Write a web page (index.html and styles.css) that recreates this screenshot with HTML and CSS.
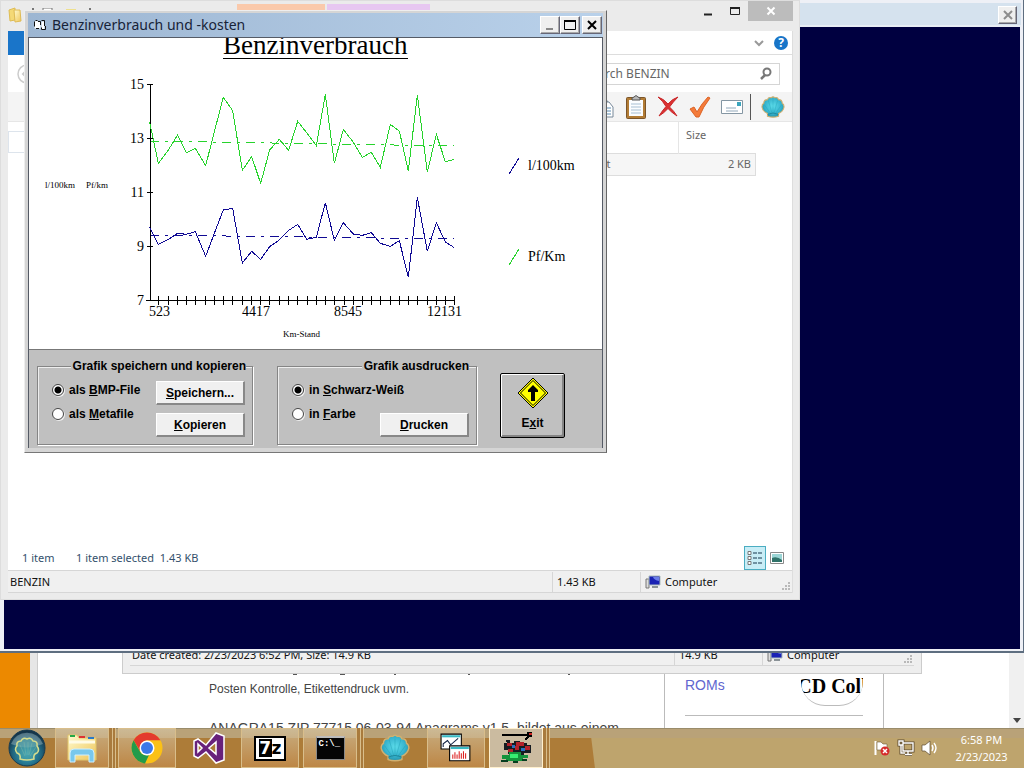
FILE: index.html
```html
<!DOCTYPE html>
<html lang="de">
<head>
<meta charset="utf-8">
<title>Benzinverbrauch und -kosten</title>
<link rel="stylesheet" href="styles.css">
</head>
<body>
<svg class="defs" width="0" height="0" aria-hidden="true">
  <defs>
    <radialGradient id="aqua" cx=".5" cy=".45" r=".6"><stop offset="0" stop-color="#5cdcea"/><stop offset=".6" stop-color="#38b5cf"/><stop offset="1" stop-color="#208ba4"/></radialGradient>
    <linearGradient id="folder" x1="0" y1="0" x2="1" y2="1"><stop offset="0" stop-color="#fffbd0"/><stop offset="1" stop-color="#efc659"/></linearGradient>
    <radialGradient id="orb" cx=".5" cy=".65" r=".6"><stop offset="0" stop-color="#3caac0"/><stop offset=".65" stop-color="#20667f"/><stop offset="1" stop-color="#153449"/></radialGradient>
    <symbol id="shell" viewBox="0 0 26 24">
      <path d="M7 22 L7 19 Q2 17 1 12 Q1 9 3 8 Q3 4 7 4 Q8 1 11 2 Q13 0 15 2 Q18 1 19 4 Q23 4 23 8 Q25 9 25 12 Q24 17 19 19 L19 22 Q13 24 7 22Z" fill="url(#aqua)" stroke="#d0b070" stroke-width="1.200"/>
      <path d="M11 20 4 10M12 19 8 5M13 19V4M14 19 18 5M15 20 22 10" stroke="#1699ab" stroke-width=".8" fill="none" opacity=".4"/>
      <path d="M7 20 Q13 17 19 20" stroke="#166f80" fill="none" opacity=".6"/>
    </symbol>
    <symbol id="pc" viewBox="0 0 16 14">
      <path d="M1 4H4V13H1Z" fill="#ddd" stroke="#777"/><path d="M4 1H15V10H4Z" fill="#1a22b4" stroke="#abb"/>
      <path d="M8 2H14V6Q9 5 8 2Z" fill="#6b7de8"/><path d="M7 12H13" stroke="#8a9297" stroke-width="2"/>
    </symbol>
    <symbol id="grip" viewBox="0 0 9 9"><path d="M6 0h2v2H6zM3 3h2v2H3zM6 3h2v2H6zM0 6h2v2H0zM3 6h2v2H3zM6 6h2v2H6z" fill="#b9b9b9"/></symbol>
  </defs>
</svg>
<div class="desktop">
  <main class="workspace">

    <section class="webpage">
      <div class="web-orange"></div>
      <div class="web-gutter"></div>
      <div class="web-body">
        <article class="web-article">
          <svg class="web-cut" viewBox="0 0 420 3"><path d="M84 1h4M131 1h5M185 1h2M259 1h2M359 1h2" stroke="#555" stroke-width="2"/></svg>
          <p class="web-small">Posten Kontrolle, Etikettendruck uvm.</p>
          <p class="web-large">ANAGRA15.ZIP 77715 06-03-94 Anagrams v1.5, bildet aus einem</p>
        </article>
        <aside class="web-side">
          <div class="rom-row">
            <a class="rom-link" href="#roms">ROMs</a>
            <div class="cd-logo"><span>CD Coll</span></div>
          </div>
        </aside>
      </div>
      <div class="web-scroll"><svg viewBox="0 0 8 5"><path d="M0 0H8L4 5Z" fill="#444"/></svg></div>
    </section>

    <section class="explorer-back">
      <div class="statusbar">
        <span class="status-main">Date created: 2/23/2023 6:52 PM, Size: 14.9 KB</span>
        <span class="status-size">14.9 KB</span>
        <span class="status-zone"><svg class="pc"><use href="#pc"/></svg>Computer</span>
        <svg class="grip"><use href="#grip"/></svg>
      </div>
    </section>

    <section class="bluewin">
      <header class="blue-title"><button class="classic-btn" aria-label="Close"><svg viewBox="0 0 12 12"><path d="M2 2 10 10M10 2 2 10" stroke="#8d8d8d" stroke-width="2"/></svg></button></header>
      <div class="blue-client"></div>
    </section>

    <section class="explorer">
      <header class="exp-title">
        <svg class="exp-icon" viewBox="0 0 14 16"><path d="M1 3 7 1V13L2 14Z" fill="#f4d976" stroke="#dfbd54"/><path d="M6 3H12L13 14 7 15Z" fill="url(#folder)" stroke="#dfbb55"/></svg>
        <svg class="quick" viewBox="0 0 64 4"><path d="M2 1h2M59 1h2" stroke="#777" stroke-width="2"/><path d="M13 0h9v4h-9z" fill="#fff" stroke="#777"/><path d="M36 1h10v3H36z" fill="#eee08d"/></svg>
        <i class="tab-peach"></i><i class="tab-violet"></i>
        <div class="exp-controls">
          <button aria-label="Minimize"><svg viewBox="0 0 12 12"><path d="M2 9.500H10" stroke="#222" stroke-width="2"/></svg></button>
          <button aria-label="Maximize"><svg viewBox="0 0 12 12"><path d="M1.500 2.500H10.500V9.500H1.500Z" fill="none" stroke="#222"/><path d="M1 3H11" stroke="#222" stroke-width="2"/></svg></button>
          <button class="exp-close" aria-label="Close"><svg viewBox="0 0 12 12"><path d="M2.500 2.500 9.500 9.500M9.500 2.500 2.500 9.500" stroke="#fff" stroke-width="2"/></svg></button>
        </div>
      </header>
      <div class="exp-inner">
        <div class="ribbon"><button class="file-tab" aria-label="File"></button>
          <svg class="chev" viewBox="0 0 10 8"><path d="M1 2 5 6 9 2" fill="none" stroke="#999" stroke-width="2"/></svg>
          <button class="help">?</button>
        </div>
        <div class="nav-row">
          <svg class="back" viewBox="0 0 20 20"><circle cx="10" cy="10" r="9" fill="none" stroke="#ccc" stroke-width="1.500"/><path d="M11 5 6 10 11 15M6 10H15" stroke="#ccc" stroke-width="2" fill="none"/></svg>
          <label class="search"><input type="text" value="Search BENZIN" aria-label="Search BENZIN">
            <svg viewBox="0 0 14 14"><circle cx="8" cy="5" r="3.500" fill="none" stroke="#777" stroke-width="2"/><path d="M6 8 2 12" stroke="#777" stroke-width="2.500"/></svg></label>
        </div>
        <div class="tools">
          <button aria-label="Copy"><svg viewBox="0 0 24 24"><path d="M4 2H12L16 7V18H4Z" fill="#fff" stroke="#789"/><path d="M10 7H17L21 12V22H10Z" fill="#fff" stroke="#789"/><path d="M12 13h7M12 16h7M12 19h7" stroke="#5889b0"/></svg></button>
          <button aria-label="Paste"><svg viewBox="0 0 24 24"><rect x="2.500" y="2.500" width="19" height="21" rx="1" fill="#b27c35" stroke="#7b552a"/><path d="M5 5H19V21H5Z" fill="#fbfdff"/><path d="M7 9h10M7 12h10M7 15h10M7 18h10" stroke="#a7bfd3"/><path d="M8 5V3L10 2Q12-1 14 2L16 3V5Z" fill="#b9b9b9" stroke="#555"/></svg></button>
          <button aria-label="Delete"><svg viewBox="0 0 24 24"><path d="M2 2Q8 4 12 9Q16 4 22 2Q17 7 13.500 12Q18 16 21 21Q15 17 12 13.500Q8 18 3 21Q6 16 10 11.500Q7 6 2 2Z" fill="#dc3132" stroke="#c8282a"/></svg></button>
          <button aria-label="Properties"><svg viewBox="0 0 24 24"><path d="M2 14 6 12 9 17Q14 8 20 2L22 3Q15 12 11 22H8Z" fill="#f47b3a" stroke="#dc6325"/></svg></button>
          <button aria-label="Mail"><svg viewBox="0 0 24 24"><path d="M1.500 5.500H22.500V18.500H1.500Z" fill="#fff" stroke="#8496a3"/><path d="M17 7H21V11H17Z" fill="#3ba5bd"/><path d="M6 13H16M6 16H18" stroke="#92a8ba"/></svg></button>
          <span class="tool-line"></span>
          <button aria-label="Shell"><svg class="shell-tool"><use href="#shell"/></svg></button>
        </div>
        <div class="files">
          <i class="nav-edge"></i>
          <table class="file-table">
            <colgroup><col><col class="size-col"></colgroup>
            <thead><tr><th></th><th class="size-head">Size</th></tr></thead>
            <tbody><tr><td class="type-cell">Text</td><td class="size-cell">2 KB</td></tr></tbody>
          </table>
        </div>
        <div class="details">
          <span class="items">1 item</span><span>1 item selected&nbsp; 1.43 KB</span>
          <button class="view on" aria-label="Details view"><svg viewBox="0 0 16 14"><path d="M1 .5h3v3H1zM1 5.500h3v3H1zM1 10.500h3v3H1z" fill="#fff" stroke="#777"/><path d="M6 2h4M11 2h4M6 7h4M11 7h4M6 12h4M11 12h4" stroke="#527486" stroke-width="1.500"/></svg></button>
          <button class="view" aria-label="Large icons view"><svg viewBox="0 0 14 12"><path d="M.5.500H13.500V11.500H.5Z" fill="#fff" stroke="#888"/><path d="M2 2H12V10H2Z" fill="#9bd5d5"/><path d="M2 6Q7 4 12 8V10H2Z" fill="#307269"/></svg></button>
        </div>
        <div class="statusbar">
          <span class="status-main">BENZIN</span>
          <span class="status-size">1.43 KB</span>
          <span class="status-zone"><svg class="pc"><use href="#pc"/></svg>Computer</span>
          <svg class="grip"><use href="#grip"/></svg>
        </div>
      </div>
    </section>

    <section class="dialog">
      <header class="dlg-title">
        <svg class="dlg-icon" viewBox="0 0 14 14"><path d="M1.500 3.500H2.500V2.500H4.500V3.500H7.500V10.500H1.500Z" fill="#fff"/><path d="M1.500 8.500V3.500M2.500 2.500H4.500M5 3.500H7.500V7M3 10.500H6" fill="none" stroke="#111"/><path d="M8.500 3.500H11.500V11.500H8.500Z" fill="#fff"/><path d="M8.500 2.500H11.500V8M12.500 8V11.500H8.500V9.500" fill="none" stroke="#111"/></svg>
        <h1>Benzinverbrauch und -kosten</h1>
        <button class="classic-btn" aria-label="Minimize"><svg viewBox="0 0 12 12"><path d="M2 10H9" stroke="#888" stroke-width="2"/></svg></button>
        <button class="classic-btn" aria-label="Maximize"><svg viewBox="0 0 12 12"><path d="M.5 1.500H11.500V10.500H.5Z" fill="none" stroke="#000"/><path d="M0 2H12" stroke="#000" stroke-width="2"/></svg></button>
        <button class="classic-btn close" aria-label="Close"><svg viewBox="0 0 12 12"><path d="M2 2 10 10M10 2 2 10" stroke="#000" stroke-width="2"/></svg></button>
      </header>
      <div class="dlg-client">
        <svg class="chart" viewBox="29 38 573 311" role="img" aria-label="Benzinverbrauch">
          <g class="chart-text">
            <text class="chart-title" x="223" y="54">Benzinverbrauch</text>
            <text x="144" y="89" text-anchor="end">15</text><text x="144" y="143" text-anchor="end">13</text><text x="144" y="197" text-anchor="end">11</text><text x="144" y="251" text-anchor="end">9</text><text x="144" y="305" text-anchor="end">7</text>
            <text x="149" y="316">523</text><text x="242" y="316">4417</text><text x="334" y="316">8545</text><text x="427" y="316">12131</text>
            <text x="528" y="170">l/100km</text><text x="528" y="261">Pf/Km</text>
            <text class="tiny" x="45" y="188">l/100km</text><text class="tiny" x="86" y="188">Pf/km</text>
            <text class="tiny" x="283" y="337">Km-Stand</text>
          </g>
          <path class="line axis" d="M223 58H408M150 84V301M147 84H153M147 138H153M147 192H153M147 246H153M146 300H455"/>
          <path class="line axis" d="M158 296V305M168 296V305M177 296V305M186 296V305M195 296V305M205 296V305M214 296V305M223 296V305M232 296V305M242 296V305M251 296V305M260 296V305M269 296V305M279 296V305M288 296V305M297 296V305M307 296V305M316 296V305M325 296V305M334 296V305M344 296V305M353 296V305M362 296V305M371 296V305M380 296V305M390 296V305M399 296V305M408 296V305M417 296V305M427 296V305M436 296V305M445 296V305M454 296V305"/>
          <path class="line green dash" d="M150 141 454 146"/><path class="line blue dash" d="M150 235 454 239"/>
          <g transform="translate(110 70) scale(.333333)">
            <polyline class="line green" points="119,157 145,280 175,240 203,195 229,248 256,235 287,287 313,185 340,82 368,122 397,301 425,260 452,340 479,240 508,208 536,241 563,154 590,188 619,227 646,73 673,280 700,178 730,217 757,262 784,247 811,292 841,163 868,183 895,303 922,75 952,306 979,193 1006,275 1033,268"/>
            <polyline class="line blue" points="119,472 145,523 175,508 203,490 229,493 256,485 287,559 313,490 340,420 368,415 397,579 425,544 452,568 479,530 508,510 535,482 563,463 590,508 619,502 646,398 673,511 700,458 730,492 757,496 784,488 811,520 841,529 868,512 895,622 922,382 952,544 979,458 1006,516 1033,533"/>
          </g>
          <path class="line blue" d="M509 174 519 158"/><path class="line green" d="M509 265 519 249"/>
        </svg>
        <form class="panel">
          <fieldset class="group save">
            <legend>Grafik speichern und kopieren</legend>
            <div class="group-row">
              <div class="radios">
                <label><input type="radio" name="save" checked><span>als <u>B</u>MP-File</span></label>
                <label><input type="radio" name="save"><span>als <u>M</u>etafile</span></label>
              </div>
              <div class="buttons"><button class="push" type="button"><span><u>S</u>peichern...</span></button><button class="push" type="button"><span><u>K</u>opieren</span></button></div>
            </div>
          </fieldset>
          <fieldset class="group print">
            <legend>Grafik ausdrucken</legend>
            <div class="group-row">
              <div class="radios">
                <label><input type="radio" name="print" checked><span>in <u>S</u>chwarz-Weiß</span></label>
                <label><input type="radio" name="print"><span>in <u>F</u>arbe</span></label>
              </div>
              <div class="buttons"><button class="push" type="button"><span><u>D</u>rucken</span></button></div>
            </div>
          </fieldset>
          <button class="exit" type="button">
            <svg viewBox="0 0 32 32"><path d="M16 1 31 16 16 31 1 16Z" fill="#ff0" stroke="#000"/><path d="M16 3.500 28.500 16 16 28.500 3.500 16Z" fill="none" stroke="#000"/><path d="M16 8 21 13V15H18V24H14V15H11V13Z"/></svg>
            <span>E<u>x</u>it</span>
          </button>
        </form>
      </div>
    </section>
  </main>

  <footer class="taskbar">
    <button class="start" aria-label="Start"><svg viewBox="0 0 38 38"><circle cx="19" cy="19" r="18" fill="url(#orb)" stroke="#173b50"/><path d="M3 15A17 17 0 0 1 35 15Q19 22 3 15Z" fill="#b4cbd0" opacity=".4"/><path d="M12 30Q13 25 9 24Q6 20 9 17Q8 12 13 12Q15 8 19 10Q23 8 25 12Q30 12 29 17Q32 21 29 24Q25 25 26 30Q19 32 12 30Z" fill="#4fa1a3" fill-opacity=".5" stroke="#d6dc8c" stroke-width="1.500"/><path d="M17 27 12 16M18 26 16 13M20 26V13M21 26 24 14M22 27 28 18" stroke="#a1c7a7" stroke-width=".5" opacity=".6"/></svg></button>
    <button class="task stacked" aria-label="Explorer"><svg viewBox="0 0 32 30"><path d="M2 2H11L13 5H30V27H2Z" fill="url(#folder)" stroke="#e1c66d"/><path d="M4 3H9" stroke="#25a847" stroke-width="2"/><path d="M13 4H19" stroke="#d33" stroke-width="2"/><path d="M22 5H28" stroke="#2a79c8" stroke-width="2"/><path d="M3 9H29" stroke="#fffbe5" stroke-width="3"/><path d="M4 29V20Q4 16 8 16H24Q28 16 28 20V29H23V22H9V29Z" fill="#79c8ec" stroke="#d0efff"/></svg></button>
    <button class="task" aria-label="Chrome"><svg viewBox="0 0 32 32"><circle cx="16" cy="16" r="15.500" fill="#fbc116"/><path d="M2.600 8.200A15.500 15.500 0 0 1 29.400 8.200H16Q9 9 9 19Z" fill="#e33b2e"/><path d="M2.600 8.200 9.200 20Q12 24 18 23L14 31.400A15.500 15.500 0 0 1 2.600 8.200Z" fill="#229b4b"/><circle cx="16" cy="16" r="7.500" fill="#fff"/><circle cx="16" cy="16" r="6" fill="#3b78e7"/></svg></button>
    <button class="task plain" aria-label="Visual Studio"><svg viewBox="0 0 32 32"><path fill-rule="evenodd" d="M1 9 5 7 13 13 23 1 31 4V28L23 31 13 20 5 26 1 24ZM5 12V20L9 16ZM23 10 16 16 23 22Z" fill="#68217a" stroke="#fff" stroke-width="1.500"/></svg></button>
    <button class="task" aria-label="7-Zip"><span class="seven"><b>7</b><em>z</em></span></button>
    <button class="task stacked" aria-label="Command prompt"><span class="cmd">C:\_</span></button>
    <button class="task plain shell-task" aria-label="Shell"><svg><use href="#shell"/></svg></button>
    <button class="task" aria-label="Charts"><svg viewBox="0 0 30 28"><path d="M1 1H20V15H1Z" fill="#fff" stroke="#000"/><path d="M2 3H19" stroke="#39b9c3" stroke-width="2"/><path d="M3 13V10L7 7 10 11 17 5" fill="none" stroke="#124"/><path d="M9 12H28V26H9Z" fill="#fff" stroke="#000"/><path d="M10 14H27" stroke="#39b9c3" stroke-width="2"/><path d="M12 24V20M14 24V18M16 24V20M18 24V17M20 24V19M22 24V17M24 24V19" stroke="#d22"/></svg></button>
    <button class="task active stacked" aria-label="Benzinverbrauch"><svg viewBox="0 0 32 32" shape-rendering="crispEdges"><path d="M2 3H28V1H31V4H29L25 8" fill="none" stroke="#000" stroke-width="2"/><path d="M29 1H32V3H29Z" fill="#c22"/><path d="M6 8H10V11H14V9H20V11H27V13H31V21H24V25H17V22H8V18H4V11H7Z" fill="#161c22"/><path d="M7 11H12V14H7ZM16 10H24V14H19V18H15ZM25 14H30V18H25ZM8 17H13V20H8Z" fill="#b4222c"/><path d="M12 13H15V16H12ZM21 16H25V19H21Z" fill="#2b6fc0"/><path d="M2 23H9V20H21V23H28V26H23V29H6V27H2Z" fill="#14943c"/><path d="M10 22H18V26H10Z" fill="#36ee72"/><path d="M1 28H8V30H1ZM13 29H18V31H13ZM22 27H27V29H22Z" fill="#063d20"/></svg></button>
    <div class="tray">
      <svg viewBox="0 0 18 18"><path d="M2.500 2V16" stroke="#fff" stroke-width="2"/><path d="M4 3H8L10 5H14V11H4Z" fill="#fff" stroke="#705a38" stroke-width=".6"/><circle cx="12" cy="12" r="4.500" fill="#d62c2c"/><path d="M10 10 14 14M14 10 10 14" stroke="#fff" stroke-width="1.500"/></svg>
      <svg viewBox="0 0 18 18"><path d="M6 4H16V12H6ZM11 12V15M8 15.500H15M2 2H6V6H2ZM4 6V14H8" fill="none" stroke="#5c4b30" stroke-width="3"/><path d="M6 4H16V12H6ZM11 12V15M8 15.500H15M2 2H6V6H2ZM4 6V14H8" fill="none" stroke="#fff" stroke-width="1.400"/></svg>
      <svg viewBox="0 0 18 18"><path d="M1 6H4L9 2V16L4 12H1Z" fill="#fff" stroke="#5c4b30" stroke-width=".7"/><path d="M11 6Q13 9 11 12M13 4Q17 9 13 14" fill="none" stroke="#fff" stroke-width="1.400"/></svg>
    </div>
    <time class="clock"><span>6:58 PM</span><span>2/23/2023</span></time>
  </footer>
</div>
</body>
</html>
```

FILE: styles.css
```css
* { box-sizing: border-box; }
body { margin: 0; font: 11px/16px "Noto Sans", "Open Sans", sans-serif; color: #222; }
button { margin: 0; padding: 0; border: 0; background: none; font: inherit; color: inherit; display: flex; align-items: center; justify-content: center; }
i { display: block; }
.defs { position: absolute; }
.desktop { display: flex; flex-direction: column; height: 100vh; overflow: hidden; }
.workspace { position: relative; flex: 1; min-height: 0; background: #fff; overflow: hidden; }

/* web page behind the windows */
.webpage { position: absolute; left: 0; right: 0; bottom: 0; height: 76px; display: flex; font-family: "Liberation Sans", sans-serif; }
.web-orange { width: 30px; background: #ec8900; }
.web-gutter { width: 8px; background: #e6e6e6; border-right: 1px solid #ccc; }
.web-body { flex: 1; display: flex; background: #fff; }
.web-article { width: 626px; padding: 21px 0 0 171px; color: #444; white-space: nowrap; }
.web-cut { display: block; width: 420px; height: 3px; }
.web-small { margin: 5px 0 0; font-size: 12px; line-height: 16px; }
.web-large { margin: 22px 0 0; font-size: 14px; line-height: 18px; }
.web-side { width: 220px; padding: 0 20px; border: solid #bbb; border-width: 0 1px; }
.rom-row { display: flex; justify-content: space-between; height: 64px; border-bottom: 1px solid #bbb; }
.rom-link { padding-top: 24px; font-size: 14px; line-height: 18px; color: #6166cf; text-decoration: none; }
.cd-logo { width: 62px; height: 54px; overflow: hidden; border-bottom: 1px solid #bbb; border-radius: 0 0 24px 24px; display: flex; align-items: flex-end; justify-content: center; font: bold 20px/26px "Liberation Serif", serif; color: #000; white-space: nowrap; padding-bottom: 6px; }
.web-scroll { width: 15px; background: #f0f0f0; display: flex; align-items: flex-end; justify-content: center; padding-bottom: 5px; }
.web-scroll svg { width: 8px; height: 5px; }

/* file windows */
.explorer-back { position: absolute; left: 122px; bottom: 54px; width: 800px; padding: 0 7px 7px; background: #eee; border: 1px solid #ccc; }
.statusbar { display: flex; align-items: center; height: 23px; border: solid #d6d6d6; border-width: 1px 0; background: #f0f0f0; color: #111; }
.status-main { flex: 1; padding-left: 2px; }
.status-size { width: 88px; padding-left: 4px; border-left: 1px solid #d6d6d6; line-height: 20px; }
.status-zone { width: 137px; padding-left: 4px; border-left: 1px solid #d6d6d6; line-height: 20px; display: flex; align-items: center; gap: 4px; }
.pc { width: 16px; height: 14px; }
.grip { width: 9px; height: 9px; align-self: flex-end; margin: 0 1px 1px 5px; }
.bluewin { position: absolute; inset: 0 0 75px; display: flex; flex-direction: column; padding: 3px 2px 2px 3px; background: #eef0f6; border: solid #5e6e80; border-width: 0 1px 2px 0; }
.blue-title { height: 24px; display: flex; justify-content: flex-end; align-items: center; padding: 2px 4px 0 0; background: #d5e2ee; border-bottom: 2px solid #e8edf4; }
.blue-client { flex: 1; margin: 0 1px 0; background: #000040; }
.classic-btn { width: 19px; height: 18px; background: #efefef; border: 1px solid; border-color: #fff #667 #667 #fff; box-shadow: inset -1px -1px #aaa; }
.classic-btn svg { width: 12px; height: 12px; }

.explorer { position: absolute; left: 0; top: 0; width: 800px; height: 600px; display: flex; flex-direction: column; padding: 0 6px 6px 7px; background: #ebebeb; border: 1px solid #ddd; }
.exp-title { display: flex; height: 30px; align-items: flex-start; }
.exp-icon { width: 14px; height: 16px; margin-top: 6px; }
.quick { width: 64px; height: 4px; margin: 7px 0 0 8px; }
.tab-peach, .tab-violet { height: 7px; margin-top: 3px; }
.tab-peach { width: 88px; margin-left: 143px; background: #fac9ab; }
.tab-violet { width: 103px; margin-left: 2px; background: #e7c7f1; }
.exp-controls { margin-left: auto; display: flex; }
.exp-controls button { width: 27px; height: 20px; }
.exp-controls .exp-close { width: 45px; background: #bcbcbc; }
.exp-controls svg { width: 12px; height: 12px; }
.exp-inner { flex: 1; min-height: 0; display: flex; flex-direction: column; background: #fff; border-right: 1px solid #ddd; }
.ribbon { display: flex; align-items: center; height: 24px; border-bottom: 1px solid #ddd; padding-right: 4px; }
.file-tab { width: 56px; height: 24px; background: #1a75c9; }
.chev { width: 10px; height: 8px; margin-left: auto; }
.help { width: 14px; height: 14px; margin-left: 10px; border-radius: 50%; background: #1875c8; color: #fff; font-weight: bold; font-size: 12px; }
.nav-row { display: flex; align-items: center; justify-content: space-between; height: 37px; padding: 0 12px 0 9px; }
.back { width: 20px; height: 20px; }
.search { display: flex; align-items: center; width: 206px; height: 22px; padding: 0 6px 0 10px; border: 1px solid #d5d5d5; }
.search input { flex: 1; min-width: 0; border: 0; padding: 0; background: none; font: inherit; font-size: 12px; color: #666; outline: 0; }
.search svg { width: 14px; height: 14px; }
.tools { display: flex; align-items: center; justify-content: flex-end; gap: 8px; height: 30px; padding-right: 7px; background: #f4f4f4; border-bottom: 1px solid #e6e6e6; }
.tools button { width: 24px; height: 24px; }
.tools svg { width: 24px; height: 24px; }
.tools .shell-tool { width: 26px; height: 24px; }
.tool-line { width: 1px; height: 26px; background: #555; margin: 0 2px 0 -2px; }
.files { flex: 1; min-height: 0; display: flex; align-items: flex-start; padding-right: 36px; }
.nav-edge { width: 152px; height: 22px; border: 1px solid #dde4ec; margin-top: 9px; }
.file-table { flex: 1; border-collapse: collapse; table-layout: fixed; color: #666; }
.file-table .size-col { width: 77px; }
.file-table th { height: 31px; padding: 0 0 4px; font-weight: normal; text-align: left; }
.file-table .size-head { padding-left: 7px; border-left: 1px solid #e5e5e5; }
.file-table td { height: 22px; padding: 0 4px; background: #f6f6f6; border: solid #ddd; border-width: 1px 0; }
.file-table .type-cell { padding-right: 68px; text-align: right; }
.file-table .size-cell { text-align: right; border-right-width: 1px; }
.details { display: flex; align-items: center; height: 24px; padding: 0 4px 0 14px; color: #34506c; }
.items { width: 54px; }
.view { width: 22px; height: 24px; }
.view svg { width: 16px; height: 14px; }
.view.on { margin-left: auto; background: #c8edf6; border: 1px solid #4badc2; }
.view:not(.on) svg { width: 14px; height: 12px; }

/* chart window */
.dialog { position: absolute; left: 24px; top: 10px; width: 583px; padding: 2px 3px 4px; background: #d5d5d5; border: 1px solid; border-color: #eee #666 #777 #eee; }
.dlg-title { display: flex; align-items: center; height: 24px; padding: 0 1px 0 5px; background: linear-gradient(90deg, #9db6d2, #b9d1ea); }
.dlg-title h1 { flex: 1; margin: 0 0 0 5px; font-size: 14px; line-height: 20px; font-weight: normal; color: #172338; white-space: nowrap; }
.dlg-icon { width: 14px; height: 14px; }
.dlg-title .classic-btn { width: 20px; }
.dlg-title .close { margin-left: 2px; }
.dlg-client { border: 1px solid #555b66; border-bottom: 0; background: #c0c0c0; }
.chart { display: block; width: 100%; background: #fff; border-bottom: 1px solid #777; }
.chart-text { font-family: "Liberation Serif", serif; font-size: 14px; fill: #000; }
.chart-title { font-size: 27px; }
.tiny { font-size: 9px; }
.line { fill: none; stroke: #000; stroke-width: 1px; vector-effect: non-scaling-stroke; shape-rendering: crispEdges; }
.green { stroke: #27d32c; }
.blue { stroke: #100a94; }
.dash { stroke-dasharray: 9 6 3 6; }
.panel { display: flex; align-items: flex-start; padding: 8px 37px 3px 8px; font: bold 12px/16px "Liberation Sans", sans-serif; color: #000; }
.group { margin: 0; min-width: 0; height: 87px; padding: 0 7px; border: 1px solid #858585; box-shadow: 1px 1px #fff, inset 1px 1px #eee; }
.group legend { margin-left: auto; padding: 0 0 0 2px; background: #c0c0c0; }
.save { width: 216px; }
.save legend { margin-right: -1px; }
.print { width: 200px; margin-left: 24px; }
.group-row { display: flex; justify-content: space-between; }
.radios { display: flex; flex-direction: column; padding: 8px 0 0 7px; gap: 8px; }
.radios label { display: flex; align-items: center; gap: 5px; white-space: nowrap; }
.radios input { appearance: none; width: 12px; height: 12px; margin: 0; border: 1px solid #444; border-radius: 50%; background: #fff; box-shadow: 1px 1px #eee; }
.radios input:checked { background: radial-gradient(circle, #000 3px, #fff 4px); }
.buttons { display: flex; flex-direction: column; gap: 8px; padding-top: 7px; }
.push { width: 89px; height: 24px; background: #f0f0f0; border: solid; border-width: 1px 2px 2px 1px; border-color: #fff #888 #888 #fff; }
.print .buttons { padding-top: 39px; }
.print .push { margin-left: -40px; }
.exit { flex-direction: column; width: 65px; height: 65px; margin: 15px 0 0 auto; padding-bottom: 4px; border: 1px solid #000; border-radius: 2px; box-shadow: inset 1px 1px #fff, inset -2px -2px #858585; gap: 6px; }
.exit svg { width: 32px; height: 32px; }

/* taskbar */
.taskbar { display: flex; align-items: stretch; height: 40px; flex: none; background: linear-gradient(#9a8c6b 0 1px, #b9a278 1px 10px, transparent 10px), linear-gradient(83deg, #ad7c38 0 590px, #bea46d 591px); }
.start { width: 54px; }
.start svg { width: 38px; height: 38px; }
.task { width: 58px; margin-right: 3px; border: 1px solid #d9be8b; background: linear-gradient(#d5c5a3aa, #c58c4daa); }
.task.stacked { width: 54px; margin: 0 9px 0 1px; box-shadow: 3px 0 #a97b3d, 4px 0 #d9be8b, 6px 0 #a97b3d, 7px 0 #d9be8b; }
.task.plain { border: 0; background: none; width: 59px; }
.task svg { width: 32px; height: 32px; }
.task.shell-task { width: 57px; margin-right: 4px; }
.shell-task svg { width: 30px; height: 28px; }
.task.active { background: #cbbba0; border: 1px solid #fff0ce; }
.seven { width: 32px; height: 25px; background: #fff; border: 2px solid #000; display: flex; align-items: center; justify-content: center; font: bold 17px/18px "DejaVu Sans", sans-serif; color: #000; }
.seven b { width: 13px; background: #000; color: #fff; }
.seven em { font-style: normal; }
.cmd { width: 29px; height: 24px; background: #050505; border: 1px solid #888; border-top: 2px solid #bbb; color: #fff; font: bold 9px/12px "Liberation Mono", monospace; text-align: left; padding-left: 2px; }
.tray { display: flex; align-items: center; gap: 6px; margin-left: auto; }
.tray svg { width: 18px; height: 18px; }
.clock { width: 85px; display: flex; flex-direction: column; align-items: center; justify-content: center; color: #fff; line-height: 17px; }
```
